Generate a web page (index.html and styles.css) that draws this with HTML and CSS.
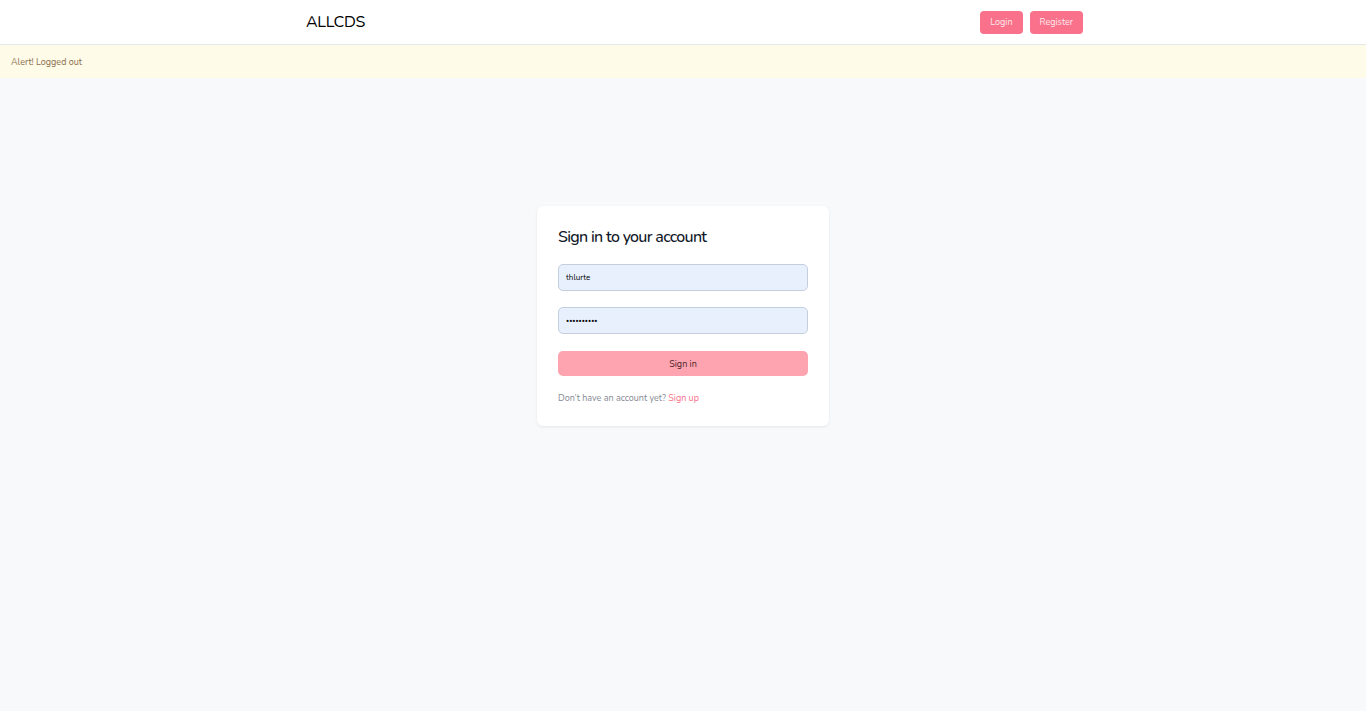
FILE: index.html
```html
<!DOCTYPE html>
<html lang="en">
<head>
    <meta charset="UTF-8">
    <meta name="viewport" content="width=device-width, initial-scale=1.0">
    <title>ALLCDS - Sign in</title>
    <link rel="stylesheet" href="styles.css">
</head>
<body>
    <header class="navbar">
        <div class="navbar-inner">
            <a class="brand" href="/">ALLCDS</a>
            <nav class="nav-actions">
                <a class="nav-btn" href="/login">Login</a>
                <a class="nav-btn" href="/register">Register</a>
            </nav>
        </div>
    </header>

    <div class="alert">Alert! Logged out</div>

    <main class="page">
        <div class="login-card">
            <h1>Sign in to your account</h1>
            <form class="login-form">
                <input type="text" class="field" value="thlurte">
                <input type="password" class="field field-password" value="password12">
                <button type="submit" class="btn-submit">Sign in</button>
            </form>
            <p class="signup">Don’t have an account yet? <a href="/register">Sign up</a></p>
        </div>
    </main>
</body>
</html>
```

FILE: styles.css
```css
:root {
    --pink: #f9718a;
    --pink-light: #fda4b0;
    --text-dark: #111827;
    --text-muted: #6b7280;
    --font-primary: 'Nunito', Lato, 'Noto Sans', sans-serif;
}

* {
    margin: 0;
    padding: 0;
    box-sizing: border-box;
}

body {
    font-family: var(--font-primary);
    background: #f8f9fa;
    min-height: 100vh;
    color: var(--text-dark);
}

.navbar {
    background: white;
    height: 45px;
    border-bottom: 1px solid #e5e7eb;
}

.navbar-inner {
    width: 800px;
    margin: 0 auto;
    height: 100%;
    padding-left: 23px;
    display: flex;
    align-items: center;
    justify-content: space-between;
}

.brand {
    font-size: 16px;
    letter-spacing: -0.3px;
    color: #000;
    text-decoration: none;
    margin-top: -1px;
}

.nav-actions {
    display: flex;
    gap: 7px;
    margin-top: 1px;
}

.nav-btn {
    display: block;
    height: 23px;
    line-height: 23px;
    padding: 0 10px;
    background: var(--pink);
    color: #fde8ec;
    font-size: 9px;
    border-radius: 4px;
    text-decoration: none;
}

.alert {
    height: 33px;
    line-height: 35px;
    padding-left: 11px;
    background: #fefbe8;
    color: #8b6e4e;
    font-size: 9px;
}

.page {
    display: flex;
    justify-content: center;
    padding-top: 128px;
}

.login-card {
    width: 292px;
    background: white;
    border-radius: 6px;
    box-shadow: 0 1px 3px rgba(0, 0, 0, 0.08);
    padding: 21px 21px 22px;
}

.login-card h1 {
    font-size: 16px;
    font-weight: 500;
    letter-spacing: -0.7px;
    line-height: 20px;
    margin-bottom: 17px;
}

.login-form {
    display: flex;
    flex-direction: column;
    gap: 16px;
}

.field {
    height: 27px;
    width: 100%;
    padding: 0 7px;
    background: #e8f0fe;
    border: 1px solid #c3cfdc;
    border-radius: 5px;
    font-family: var(--font-primary);
    font-size: 8px;
    color: #000;
}

.field-password {
    font-size: 6px;
}

.btn-submit {
    height: 25px;
    width: 100%;
    margin-top: 1px;
    border: none;
    border-radius: 5px;
    background: var(--pink-light);
    font-family: var(--font-primary);
    font-size: 9px;
    color: #4b1c26;
    cursor: pointer;
}

.signup {
    margin-top: 16px;
    font-size: 9px;
    color: #858a93;
}

.signup a {
    color: var(--pink);
    text-decoration: none;
}
```
